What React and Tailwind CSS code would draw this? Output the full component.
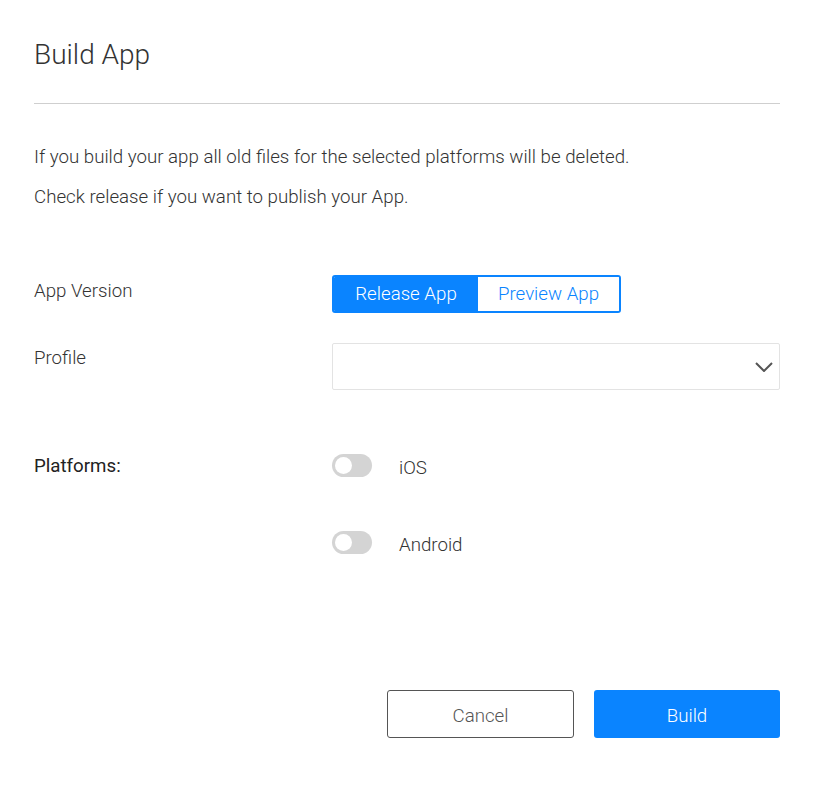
import React, { useState } from 'react';

function Toggle({ on, onChange }) {
  return (
    <button
      type="button"
      onClick={() => onChange(!on)}
      className={`relative w-[40px] h-[23px] rounded-full ${on ? 'bg-[#0a84ff]' : 'bg-[#d4d4d4]'}`}
    >
      <span
        className={`absolute top-[3px] w-[17px] h-[17px] rounded-full bg-white ${on ? 'left-[20px]' : 'left-[3px]'}`}
      />
    </button>
  );
}

export default function App() {
  const [version, setVersion] = useState('release');
  const [ios, setIos] = useState(false);
  const [android, setAndroid] = useState(false);

  return (
    <div className="w-[820px] h-[798px] bg-white text-[#333] font-['Roboto',sans-serif]">
      <div className="ml-[34px] w-[746px] pt-[37px]">
        <h1 className="text-[28px] font-light leading-[36px] text-[#333]">Build App</h1>
        <div className="mt-[30px] h-px bg-[#cfcfcf]" />

        <div className="mt-[41px] text-[18.7px] font-light text-[#333] leading-[24px]">
          <p>If you build your app all old files for the selected platforms will be deleted.</p>
          <p className="mt-[16px]">Check release if you want to publish your App.</p>
        </div>

        <div className="mt-[66px] flex items-center">
          <div className="w-[298px] text-[18.7px] font-light leading-[24px] -mt-[6px]">App Version</div>
          <div className="flex h-[38px] rounded-[3px] border-2 border-[#0a84ff] overflow-hidden text-[18.7px] font-light">
            <button
              type="button"
              onClick={() => setVersion('release')}
              className={`w-[144px] ${version === 'release' ? 'bg-[#0a84ff] text-white' : 'bg-white text-[#0a84ff]'}`}
            >
              Release App
            </button>
            <button
              type="button"
              onClick={() => setVersion('preview')}
              className={`w-[141px] ${version === 'preview' ? 'bg-[#0a84ff] text-white' : 'bg-white text-[#0a84ff]'}`}
            >
              Preview App
            </button>
          </div>
        </div>

        <div className="mt-[30px] flex">
          <div className="w-[298px] text-[18.7px] font-light leading-[24px] pt-[3px]">Profile</div>
          <div className="flex-1 h-[47px] border border-[#e3e3e3] rounded-[2px] flex items-center justify-end pr-[6px]">
            <svg width="18" height="10" viewBox="0 0 18 10" fill="none">
              <path d="M1 1l8 8 8-8" stroke="#555" strokeWidth="2" />
            </svg>
          </div>
        </div>

        <div className="mt-[64px] flex">
          <div className="w-[298px] text-[18.7px] font-normal leading-[24px] text-[#222]">Platforms:</div>
          <div className="flex flex-col gap-[54px]">
            <div className="flex items-center gap-[27px] h-[23px]">
              <Toggle on={ios} onChange={setIos} />
              <span className="text-[18.7px] font-light leading-none pt-[6px]">iOS</span>
            </div>
            <div className="flex items-center gap-[27px] h-[23px]">
              <Toggle on={android} onChange={setAndroid} />
              <span className="text-[18.7px] font-light leading-none pt-[6px]">Android</span>
            </div>
          </div>
        </div>

        <div className="mt-[136px] flex justify-end gap-[20px]">
          <button
            type="button"
            className="w-[187px] h-[48px] pt-[4px] border border-[#555] rounded-[3px] text-[18.7px] font-light text-[#555]"
          >
            Cancel
          </button>
          <button
            type="button"
            className="w-[186px] h-[48px] pt-[4px] rounded-[3px] bg-[#0a84ff] text-[18.7px] font-light text-white"
          >
            Build
          </button>
        </div>
      </div>
    </div>
  );
}
